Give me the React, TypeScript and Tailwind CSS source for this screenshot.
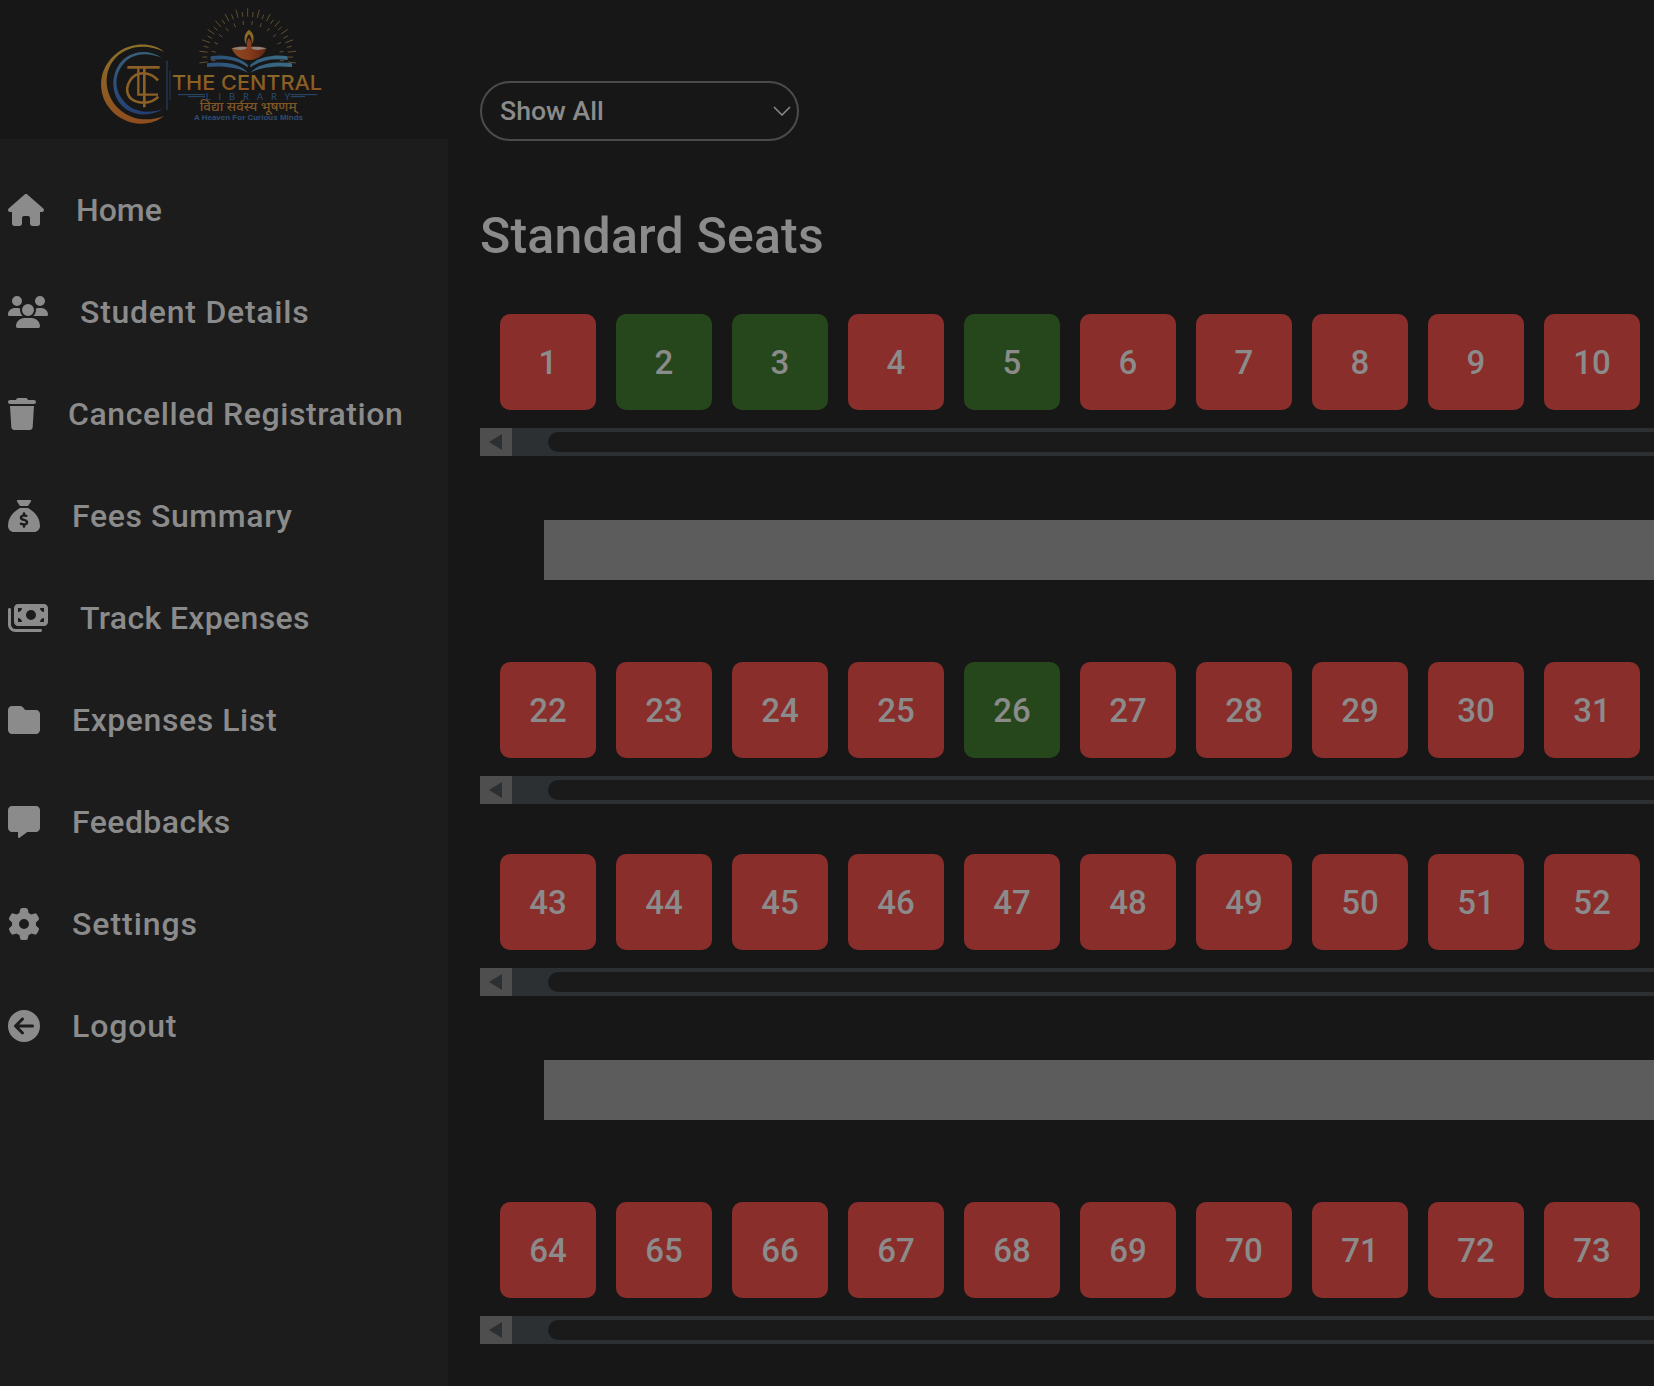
import { FaHouse, FaUsers, FaTrash, FaSackDollar, FaMoneyBills, FaFolder, FaMessage, FaGear, FaCircleArrowLeft } from "react-icons/fa6";

const menu = [
  { label: "Home", Icon: FaHouse, size: "w-9", track: "tracking-[0px]" },
  { label: "Student Details", Icon: FaUsers, size: "w-10", track: "tracking-[0.75px]" },
  { label: "Cancelled Registration", Icon: FaTrash, size: "w-7", track: "tracking-[0.58px]" },
  { label: "Fees Summary", Icon: FaSackDollar, size: "w-8", track: "tracking-[0.6px]" },
  { label: "Track Expenses", Icon: FaMoneyBills, size: "w-10", track: "tracking-[0.36px]" },
  { label: "Expenses List", Icon: FaFolder, size: "w-8", track: "tracking-[0.57px]" },
  { label: "Feedbacks", Icon: FaMessage, size: "w-8", track: "tracking-[0.44px]" },
  { label: "Settings", Icon: FaGear, size: "w-8", track: "tracking-[0.95px]" },
  { label: "Logout", Icon: FaCircleArrowLeft, size: "w-8", track: "tracking-[0.85px]" },
];

const vacant = new Set([2, 3, 5, 26]);

function Logo() {
  const ray = (deg: number, r1: number, r2: number) => {
    const a = (deg * Math.PI) / 180;
    return { x1: 473 + r1 * Math.cos(a), y1: 171 - r1 * Math.sin(a), x2: 473 + r2 * Math.cos(a), y2: 171 - r2 * Math.sin(a) };
  };
  const rays = [
    ...Array.from({ length: 29 }, (_, i) => ray(-7 + (i * 194) / 28, 121, i % 2 ? 136 : 146)),
    ...Array.from({ length: 14 }, (_, i) => ray(-6 + (i * 192) / 13, 97, 109)),
  ];
  return (
    <svg viewBox="0 0 750 417" className="ml-[90px] h-[139px] w-[250px]" fill="none">
      <defs>
        <linearGradient id="gold" x1="0" y1="0" x2="0" y2="1">
          <stop offset="0" stopColor="#8b7029" />
          <stop offset="1" stopColor="#8f4d1e" />
        </linearGradient>
        <linearGradient id="blue" x1="0" y1="0" x2="0" y2="1">
          <stop offset="0" stopColor="#376079" />
          <stop offset="1" stopColor="#263f75" />
        </linearGradient>
        <linearGradient id="pages" x1="0" y1="0" x2="1" y2="0">
          <stop offset="0" stopColor="#2d5078" />
          <stop offset="1" stopColor="#3b6a84" />
        </linearGradient>
        <linearGradient id="bowl" x1="0" y1="0" x2="1" y2="0">
          <stop offset="0" stopColor="#8a4a22" />
          <stop offset="0.5" stopColor="#873c1c" />
          <stop offset="1" stopColor="#5c2412" />
        </linearGradient>
      </defs>
      <path d="M222 155C190 128 130 125 88 154C46 184 26 228 36 278C46 326 92 368 150 371C180 372 205 362 222 348C170 368 116 358 80 320C42 276 38 212 80 170C120 134 172 132 222 155Z" fill="url(#gold)" />
      <path d="M216 174C170 142 110 154 83 200C58 244 70 304 112 330C146 350 186 346 218 328C180 340 140 338 112 314C76 282 70 236 94 200C120 160 168 154 216 174Z" fill="url(#blue)" />
      <g stroke="#8b5f25" strokeWidth="8">
        <path d="M112 202H209" />
        <path d="M204 241C180 213 138 212 120 242C102 272 114 300 144 306C170 311 190 306 205 290" />
        <path d="M163 204V322" />
        <path d="M145 205V284H204" strokeWidth="7" />
      </g>
      <path d="M231 182V330" stroke="#2c4972" strokeWidth="3" />
      <path d="M240 212V300" stroke="#2c4972" strokeWidth="2" />
      <g stroke="#5f5030" strokeWidth="3">
        {rays.map((r, i) => <line key={i} {...r} />)}
      </g>
      <path d="M477 89C462 100 460 118 469 134C468 118 471 109 477 103C483 109 487 118 485 134C495 116 492 100 477 89Z" fill="#8b6a29" />
      <path d="M477 113C469 124 470 134 472 143H483C485 134 485 124 477 113Z" fill="#8b3f1e" />
      <path d="M425 145C450 138 505 138 530 145C520 170 500 180 477 180C454 180 434 168 425 145Z" fill="url(#bowl)" />
      <path d="M426 145C440 139 462 139 472 142C470 150 448 154 426 145ZM529 145C515 139 493 139 483 142C485 150 507 154 529 145Z" fill="#8f8078" />
      <path d="M362 169C405 162 452 172 477 198C502 172 550 162 593 169V180C550 174 512 180 482 202H472C444 180 405 174 362 180Z" fill="url(#pages)" />
      <path d="M351 190C395 184 448 188 475 219C448 202 395 196 351 201ZM606 190C562 184 506 188 480 219C506 202 562 196 606 201Z" fill="url(#pages)" />
      <path d="M477 196V222" stroke="#171717" strokeWidth="7" />
      <text x="246" y="269" textLength="450" lengthAdjust="spacingAndGlyphs" fontSize="60" className="font-['Inter',sans-serif] font-medium" fill="url(#gold)">THE CENTRAL</text>
      <path d="M264 284H345M295 290H345M602 284H682M602 290H645" stroke="#2b4c74" strokeWidth="3" />
      <text x="347" y="299" textLength="254" fontSize="28" className="font-['Lato',sans-serif]" fill="#2b4c74">LIBRARY</text>
      <text x="329" y="332" textLength="291" lengthAdjust="spacingAndGlyphs" fontSize="36" className="font-['Noto_Sans_Devanagari','Noto_Sans',sans-serif] font-medium" fill="#805526">विद्या सर्वस्य भूषणम्</text>
      <text x="312" y="359" textLength="327" lengthAdjust="spacingAndGlyphs" fontSize="22" className="font-['Liberation_Sans',sans-serif] font-bold" fill="#2e4d74">A Heaven For Curious Minds</text>
    </svg>
  );
}

function SeatRow({ start }: { start: number }) {
  return (
    <div className="flex flex-col gap-[18px]">
      <div className="flex gap-5 pl-5">
        {Array.from({ length: 10 }, (_, i) => start + i).map((n) => (
          <button
            key={n}
            className={`flex h-24 w-24 shrink-0 items-center justify-center rounded-[10px] pt-0.5 text-[33px] font-medium ${vacant.has(n) ? "bg-[#26471b]" : "bg-[#8a2e2c]"}`}
          >
            {n}
          </button>
        ))}
      </div>
      <div className="flex h-7 bg-[#2c3033]">
        <div className="flex w-8 items-center bg-[#4e4e4e] pl-[9px]">
          <svg viewBox="0 0 13 16" className="h-4 w-[13px]"><path d="M0 8L13 0V16Z" fill="#2c3033" /></svg>
        </div>
        <div className="my-1 ml-9 flex-1 rounded-l-[10px] bg-[#1a1a1a]" />
      </div>
    </div>
  );
}

function Aisle() {
  return <div className="mt-16 mb-[82px] ml-16 h-[60px] bg-[#5c5c5c]" />;
}

export default function App() {
  return (
    <div className="flex h-[1386px] w-[1654px] overflow-hidden bg-[#171717] font-['Roboto',sans-serif] text-[#8b8b8b]">
      <aside className="flex w-[448px] shrink-0 flex-col">
        <Logo />
        <nav className="flex flex-1 flex-col gap-[54px] bg-[#1c1c1c] pt-[47px] pl-2">
          {menu.map(({ label, Icon, size, track }) => (
            <a key={label} className="flex h-12 items-center gap-8">
              <Icon className={`h-8 shrink-0 ${size}`} />
              <span className={`text-[32px] font-medium whitespace-nowrap ${track}`}>{label}</span>
            </a>
          ))}
        </nav>
      </aside>
      <main className="flex min-w-0 flex-1 flex-col pt-[81px] pl-8">
        <button className="flex h-[60px] w-[319px] items-center justify-between rounded-[30px] border-2 border-[#4b4b4b] pr-[6px] pl-[18px] text-[26.667px] font-medium">
          <span>Show All</span>
          <svg viewBox="0 0 18 10" className="h-[10px] w-[18px]" fill="none" stroke="#8b8b8b" strokeWidth="1.500"><path d="M1 1L9 9L17 1" /></svg>
        </button>
        <h1 className="mt-[63px] h-16 text-[50px] leading-[64px] font-medium tracking-[0.2px]">Standard Seats</h1>
        <div className="mt-[46px] flex flex-col">
          <SeatRow start={1} />
          <Aisle />
          <SeatRow start={22} />
          <div className="h-[50px]" />
          <SeatRow start={43} />
          <Aisle />
          <SeatRow start={64} />
        </div>
      </main>
    </div>
  );
}
